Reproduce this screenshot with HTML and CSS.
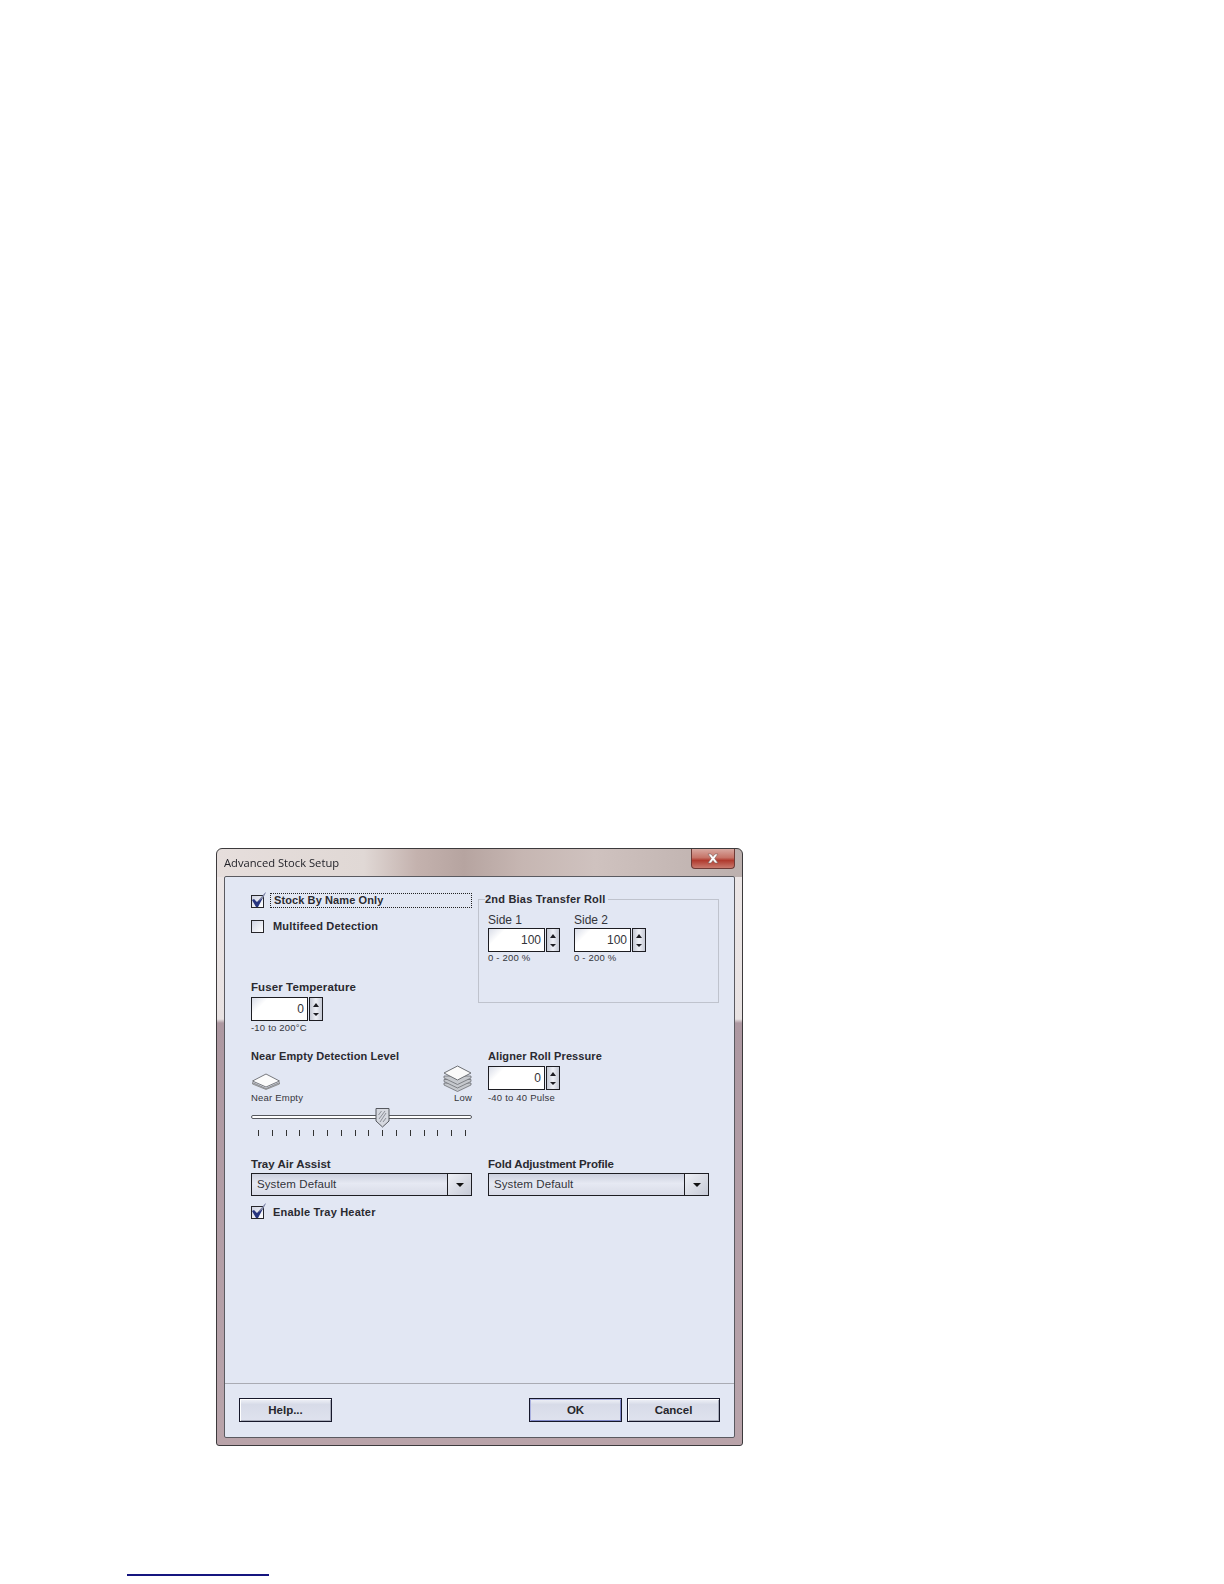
FILE: index.html
```html
<!DOCTYPE html>
<html lang="en">
<head>
  <meta charset="UTF-8">
  <title>Advanced Stock Setup</title>
  <link rel="stylesheet" href="styles.css">
</head>
<body>
  <!-- Dialog -->
  <div class="dialog">
    <div class="titlebar">
      <span class="title">Advanced Stock Setup</span>
      <div class="close">
        <svg width="14" height="11" viewBox="0 0 14 11"><path d="M2 1h3l2 2.500L9 1h3L8.700 5.500 12 10H9L7 7.400 5 10H2l3.300-4.500z" fill="#fff" stroke="#7a5a58" stroke-width=".6"/></svg>
      </div>
    </div>

    <div class="panel">
      <div class="main">
        <!-- Top -->
        <div class="row row-top">
          <div class="col">
            <div class="check check-focus">
              <span class="box box-first"><svg class="tick" width="20" height="20" viewBox="0 0 20 20"><path d="M2 9l2-1 3 3 9-10-8 15h-2z" fill="#27357f"/><path d="M7 11l9-10-3 6z" fill="#8b90a8"/></svg></span>
              <span class="focus-label">Stock By Name Only</span>
            </div>
            <div class="check check-multi">
              <span class="box"></span>
              <span class="check-label">Multifeed Detection</span>
            </div>
            <div class="fuser">
              <div class="label label-fuser">Fuser Temperature</div>
              <div class="spin-wrap spin-fuser">
                <div class="field">0</div>
                <div class="spin"><i class="up"></i><i class="down"></i></div>
              </div>
              <div class="hint hint-fuser">-10 to 200°C</div>
            </div>
          </div>

          <fieldset class="group">
            <legend>2nd Bias Transfer Roll</legend>
            <div class="sides">
              <div>
                <div class="side-label">Side 1</div>
                <div class="spin-wrap">
                  <div class="field">100</div>
                  <div class="spin"><i class="up"></i><i class="down"></i></div>
                </div>
                <div class="hint hint-side">0 - 200 %</div>
              </div>
              <div>
                <div class="side-label">Side 2</div>
                <div class="spin-wrap">
                  <div class="field">100</div>
                  <div class="spin"><i class="up"></i><i class="down"></i></div>
                </div>
                <div class="hint hint-side">0 - 200 %</div>
              </div>
            </div>
          </fieldset>
        </div>

        <!-- Near empty / aligner -->
        <div class="row row-mid">
          <div class="col">
            <div class="label-sm">Near Empty Detection Level</div>
            <div class="levels">
              <div>
                <svg class="stack-thin" width="30" height="18" viewBox="0 0 30 18">
                  <path d="M1.500 10.500L15 16.500l13.500-6V12L15 17.500 1.500 12z" fill="#b5b8bd" stroke="#777" stroke-width=".7"/>
                  <path d="M1.500 9L15 2l13.500 7L15 15z" fill="#fbfbfb" stroke="#77797e" stroke-width="1"/>
                </svg>
                <div class="hint">Near Empty</div>
              </div>
              <div class="level-right">
                <svg class="stack-thick" width="29" height="27" viewBox="0 0 29 27">
                  <g fill="#c5c8cd" stroke="#6d7075" stroke-width=".8">
                    <path d="M1 20l13.500 6.500L28 20v-2H1z"/>
                    <path d="M1 16.500l13.500 6.500L28 16.500v-2H1z"/>
                    <path d="M1 13l13.500 6.500L28 13v-2H1z"/>
                  </g>
                  <path d="M1 8L14.500 1 28 8l-13.500 7z" fill="#fafafa" stroke="#6d7075"/>
                </svg>
                <div class="hint">Low</div>
              </div>
            </div>
            <div class="slider">
              <div class="track"></div>
              <svg class="thumb" width="15" height="21" viewBox="0 0 15 21">
                <path d="M1 1.500h13V14l-6.500 6L1 14z" fill="#d6d9e0" stroke="#55585e"/>
                <path d="M4 12l6-8M5 15l6-9M3.500 8l3-4M8 15l3-4" stroke="#777b84" stroke-width=".8"/>
              </svg>
            </div>
            <div class="ticks">
              <i></i><i></i><i></i><i></i><i></i><i></i><i></i><i></i>
              <i></i><i></i><i></i><i></i><i></i><i></i><i></i><i></i>
            </div>
          </div>
          <div class="col">
            <div class="label-sm">Aligner Roll Pressure</div>
            <div class="spin-wrap aligner">
              <div class="field">0</div>
              <div class="spin"><i class="up"></i><i class="down"></i></div>
            </div>
            <div class="hint hint-aligner">-40 to 40 Pulse</div>
          </div>
        </div>

        <!-- Dropdowns -->
        <div class="row row-drop">
          <div class="col">
            <div class="label">Tray Air Assist</div>
            <div class="combo">
              <span class="combo-text">System Default</span>
              <span class="combo-btn"><i></i></span>
            </div>
            <div class="check check-heater">
              <span class="box"><svg class="tick" width="20" height="20" viewBox="0 0 20 20"><path d="M2 9l2-1 3 3 9-10-8 15h-2z" fill="#27357f"/><path d="M7 11l9-10-3 6z" fill="#8b90a8"/></svg></span>
              <span class="check-label">Enable Tray Heater</span>
            </div>
          </div>
          <div class="col">
            <div class="label label-fold">Fold Adjustment Profile</div>
            <div class="combo">
              <span class="combo-text">System Default</span>
              <span class="combo-btn"><i></i></span>
            </div>
          </div>
        </div>
      </div>

      <!-- Buttons -->
      <div class="footer">
        <div class="btn">Help...</div>
        <div class="footer-right">
          <div class="btn btn-default">OK</div>
          <div class="btn">Cancel</div>
        </div>
      </div>
    </div>
  </div>

  <div class="page-rule"></div>
</body>
</html>
```

FILE: styles.css
```css
* {
  margin: 0;
  padding: 0;
  box-sizing: border-box;
}

body {
  background: #fff;
  font-family: "Liberation Sans", Arial, sans-serif;
  color: #1c1c1e;
  height: 1584px;
  overflow: hidden;
  padding: 848px 0 0 216px;
}

/* Fenster */
.dialog {
  width: 527px;
  height: 598px;
  display: flex;
  flex-direction: column;
  padding: 0 7px 7px 7px;
  border: 1px solid #3c3a3c;
  border-radius: 6px 6px 3px 3px;
  filter: blur(.3px);
  background:
    linear-gradient(to right, #e6dedc 0, #e0d8d5 28%, #c4b2ae 38%, #b6a4a0 47%, #c6b6b2 58%, #cfc2bf 72%, #c4b7b4 88%, #bcb0ae 100%) top / 100% 28px no-repeat,
    linear-gradient(to bottom, #ece6e6 0, #e8e2e2 170px, #ad98a1 174px, #b7a3aa 560px, #b9a3a9 100%);
}

.titlebar {
  height: 27px;
  flex: none;
  display: flex;
  justify-content: space-between;
  align-items: flex-start;
}

.title {
  font-family: "Open Sans", sans-serif;
  font-size: 11.200px;
  color: #23232a;
  margin-top: 6px;
  line-height: 16px;
}

.close {
  width: 44px;
  height: 20px;
  display: flex;
  align-items: center;
  justify-content: center;
  border: 1px solid #6e3a36;
  border-top: 0;
  border-radius: 0 0 4px 4px;
  background: linear-gradient(to bottom, #d8a8a0 0, #c67468 45%, #b03a2e 60%, #c97a6e 100%);
}

.panel {
  flex: 1;
  display: flex;
  flex-direction: column;
  background: #e2e7f3;
  border: 1px solid #5a5a60;
  border-radius: 2px;
}

.main {
  flex: 1;
  padding: 16px 0 0 26px;
}

.row {
  display: grid;
  grid-template-columns: 221px 221px;
  column-gap: 16px;
}

.row-top {
  height: 156px;
}

.row-mid {
  height: 109px;
}

/* Checkboxen */
.check {
  display: flex;
  align-items: center;
  position: relative;
}

.box {
  position: relative;
  width: 13px;
  height: 13px;
  flex: none;
  background: linear-gradient(135deg, #cfd4e4, #fff);
  border: 1px solid #26262a;
}

.box-first {
  top: 1px;
}

.tick {
  position: absolute;
  left: -2px;
  top: -5px;
}

.check-label,
.focus-label {
  position: relative;
  top: -1px;
  font-size: 11px;
  font-weight: bold;
  letter-spacing: .2px;
  color: #2a2a30;
}

.check-label {
  margin-left: 9px;
}

.focus-label {
  top: 0;
  flex: 1;
  margin-left: 6px;
  padding: 0 0 0 3px;
  height: 15px;
  line-height: 13px;
  letter-spacing: .1px;
  border: 1px dotted #222;
}

.check-multi {
  margin-top: 12px;
}

.check-heater {
  margin-top: 10px;
}

.fuser {
  margin-top: 47px;
}

/* Beschriftungen */
.label {
  font-size: 11.500px;
  font-weight: bold;
  line-height: 14px;
  color: #2a2a30;
}

.label-fuser {
  letter-spacing: .1px;
}

.label-fold {
  letter-spacing: -.15px;
}

.label-sm {
  font-size: 11px;
  font-weight: bold;
  letter-spacing: .1px;
  line-height: 14px;
  color: #2a2a30;
}

.side-label {
  font-size: 12px;
  line-height: 14px;
  color: #33343a;
}

.hint {
  font-size: 9.500px;
  letter-spacing: .2px;
  line-height: 12px;
  color: #35363c;
}

.hint-fuser {
  margin-top: 1px;
}

.hint-side {
  margin-top: 0;
}

.hint-aligner {
  margin-top: 2px;
}

/* Zahlenfelder */
.spin-wrap {
  display: flex;
  gap: 1px;
  margin-top: 1px;
}

.spin-fuser {
  margin-top: 3px;
}

.field {
  height: 24px;
  width: 57px;
  border: 1px solid #1d1d22;
  background: linear-gradient(135deg, #d9dde8 0, #fff 22%, #fff 100%);
  font-size: 12px;
  line-height: 23px;
  text-align: right;
  padding-right: 3px;
  color: #33343a;
}

.spin {
  width: 14px;
  height: 24px;
  border: 1px solid #1d1d22;
  background: linear-gradient(to right, #c5c9d4, #eef0f6 50%, #c5c9d4);
  display: flex;
  flex-direction: column;
  justify-content: space-between;
  align-items: center;
  padding: 5px 0 4px;
}

.spin i {
  width: 0;
  height: 0;
  border-left: 3px solid transparent;
  border-right: 3px solid transparent;
}

.spin .up {
  border-bottom: 4px solid #1d1d22;
}

.spin .down {
  border-top: 3px solid #1d1d22;
}

/* Rahmen */
.group {
  margin: -1px 0 0 -10px;
  width: 241px;
  height: 111px;
  border: 1px solid #bfc3cd;
  padding: 0 0 0 9px;
}

.group legend {
  font-size: 11px;
  font-weight: bold;
  letter-spacing: .2px;
  line-height: 14px;
  margin-left: -3px;
  padding-right: 2px;
  color: #2a2a30;
}

.sides {
  display: flex;
  gap: 14px;
  margin-top: 7px;
}

/* Regler */
.levels {
  display: flex;
  justify-content: space-between;
  align-items: flex-end;
  height: 41px;
}

.stack-thin {
  display: block;
  margin-bottom: 2px;
}

.level-right {
  display: flex;
  flex-direction: column;
  align-items: flex-end;
}

.stack-thick {
  display: block;
}

.slider {
  position: relative;
  height: 26px;
  display: flex;
  align-items: center;
}

.track {
  width: 100%;
  height: 4px;
  border: 1px solid #55585e;
  border-radius: 2px;
  background: #fff;
}

.thumb {
  position: absolute;
  left: 124px;
  top: 3px;
}

.ticks {
  display: flex;
  justify-content: space-between;
  padding: 0 6px 0 7px;
}

.ticks i {
  width: 1px;
  height: 6px;
  background: #333;
}

.aligner {
  margin-top: 3px;
}

/* Auswahlfelder */
.combo {
  display: flex;
  height: 23px;
  margin-top: 2px;
  border: 1px solid #1d1d22;
  background: linear-gradient(to bottom, #ccd0de 0, #e6e9f3 45%, #d8dbe7 100%);
}

.row-drop .label {
  margin-top: -1px;
}

.combo-text {
  flex: 1;
  padding-left: 5px;
  font-size: 11.500px;
  letter-spacing: .1px;
  line-height: 21px;
  color: #33343a;
}

.combo-btn {
  width: 24px;
  border-left: 1px solid #1d1d22;
  background: linear-gradient(135deg, #eef0f6, #c6cad6);
  display: flex;
  align-items: center;
  justify-content: center;
}

.combo-btn i {
  width: 0;
  height: 0;
  border-left: 4px solid transparent;
  border-right: 4px solid transparent;
  border-top: 4px solid #111;
}

/* Fusszeile */
.footer {
  height: 54px;
  flex: none;
  border-top: 1px solid #a9abb3;
  padding: 14px 14px 0 14px;
  display: flex;
  justify-content: space-between;
  align-items: flex-start;
}

.footer-right {
  display: flex;
  gap: 5px;
}

.btn {
  width: 93px;
  height: 24px;
  border: 1px solid #16182a;
  background: linear-gradient(to bottom, #f0f2f8 0, #d7dbe8 25%, #dfe2ee 100%);
  box-shadow: inset 1px 1px 0 #fff, inset -1px -1px 0 #a8acba;
  font-size: 11.500px;
  font-weight: bold;
  line-height: 23px;
  text-align: center;
  color: #26262c;
}

.btn-default {
  box-shadow: inset 1px 1px 0 #a9b0e0, inset -1px -1px 0 #8088c8;
}

/* Linie unten */
.page-rule {
  width: 142px;
  height: 2px;
  margin: 128px 0 0 -89px;
  background: #15157f;
}
```
